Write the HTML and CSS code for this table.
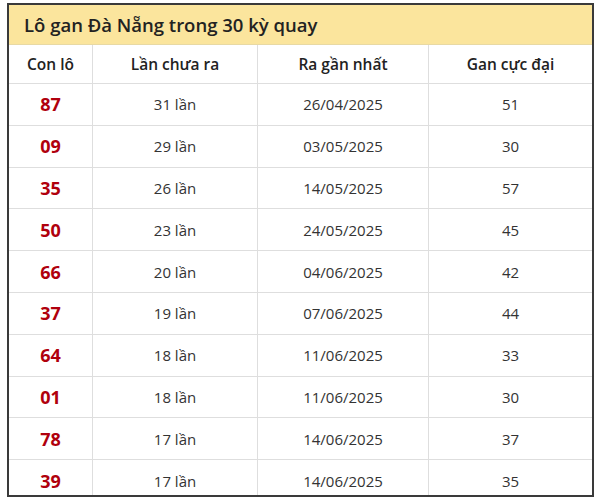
FILE: index.html
```html
<!DOCTYPE html>
<html lang="vi">
<head>
<meta charset="utf-8">
<link rel="stylesheet" href="styles.css">
</head>
<body>
<div class="wrap">
  <div class="title">Lô gan Đà Nẵng trong 30 kỳ quay</div>
  <div class="row head">
    <div class="cell">Con lô</div>
    <div class="cell">Lần chưa ra</div>
    <div class="cell">Ra gần nhất</div>
    <div class="cell">Gan cực đại</div>
  </div>
  <div class="row"><div class="cell num">87</div><div class="cell">31 lần</div><div class="cell">26/04/2025</div><div class="cell">51</div></div>
  <div class="row"><div class="cell num">09</div><div class="cell">29 lần</div><div class="cell">03/05/2025</div><div class="cell">30</div></div>
  <div class="row"><div class="cell num">35</div><div class="cell">26 lần</div><div class="cell">14/05/2025</div><div class="cell">57</div></div>
  <div class="row"><div class="cell num">50</div><div class="cell">23 lần</div><div class="cell">24/05/2025</div><div class="cell">45</div></div>
  <div class="row"><div class="cell num">66</div><div class="cell">20 lần</div><div class="cell">04/06/2025</div><div class="cell">42</div></div>
  <div class="row"><div class="cell num">37</div><div class="cell">19 lần</div><div class="cell">07/06/2025</div><div class="cell">44</div></div>
  <div class="row"><div class="cell num">64</div><div class="cell">18 lần</div><div class="cell">11/06/2025</div><div class="cell">33</div></div>
  <div class="row"><div class="cell num">01</div><div class="cell">18 lần</div><div class="cell">11/06/2025</div><div class="cell">30</div></div>
  <div class="row"><div class="cell num">78</div><div class="cell">17 lần</div><div class="cell">14/06/2025</div><div class="cell">37</div></div>
  <div class="row"><div class="cell num">39</div><div class="cell">17 lần</div><div class="cell">14/06/2025</div><div class="cell">35</div></div>
</div>
</body>
</html>
```

FILE: styles.css
```css
html, body {
  margin: 0;
  padding: 0;
  background: #ffffff;
}
body {
  font-family: "Open Sans", "Noto Sans", sans-serif;
  color: #2b2b2b;
}
.wrap {
  margin: 3px 0 0 7px;
  width: 583px;
  height: 490px;
  border: 2px solid #3a3a3a;
  overflow: hidden;
  background: #fff;
}
.title {
  height: 40px;
  box-sizing: border-box;
  background: #fbe59d;
  font-size: 18.5px;
  font-weight: 600;
  color: #222;
  padding-left: 15px;
  display: flex;
  align-items: center;
  border-bottom: 1px solid #e8d9a4;
}
.row {
  display: grid;
  grid-template-columns: 84px 165px 171px 1fr;
  height: 41.8px;
  box-sizing: border-box;
  border-bottom: 1px solid #dedede;
}
.row.head {
  height: 39px;
}
.cell {
  display: flex;
  align-items: center;
  justify-content: center;
  font-size: 15px;
  color: #333;
  border-right: 1px solid #dedede;
}
.cell:last-child {
  border-right: none;
}
.head .cell {
  font-weight: 600;
  font-size: 15.5px;
  color: #222;
}
.cell.num {
  font-size: 18px;
  font-weight: 700;
  color: #b0000d;
}
```
